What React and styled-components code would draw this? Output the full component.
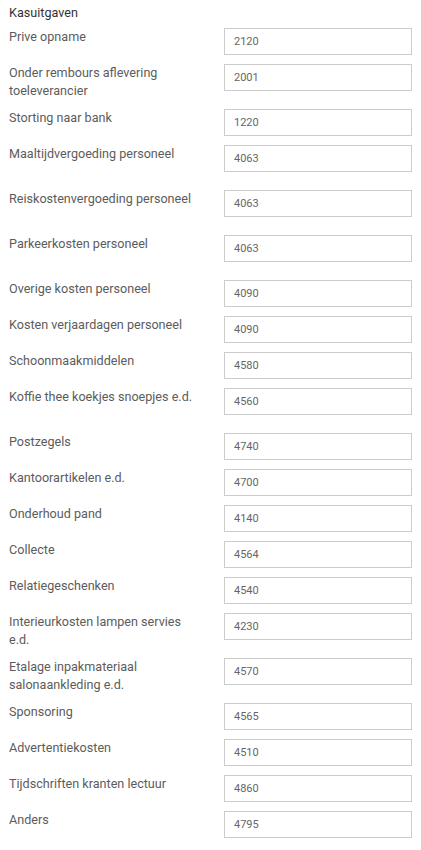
import React from "react";
import styled, { createGlobalStyle } from "styled-components";

const Global = createGlobalStyle`
  html, body { margin: 0; padding: 0; background: #fff; }
  body { font-family: Roboto, "Noto Sans", sans-serif; }
`;

const Page = styled.div`
  width: 421px;
  padding: 4px 9px 20px 9px;
  box-sizing: border-box;
`;

const Heading = styled.div`
  font-size: 12.6px;
  line-height: 18px;
  color: #333;
  margin-bottom: 6px;
`;

const Row = styled.div`
  display: grid;
  grid-template-columns: 185px 188px;
  column-gap: 30px;
  align-items: start;
  margin-bottom: 9px;
`;

const Label = styled.div`
  font-size: 12.6px;
  line-height: 18px;
  color: #5c5c5c;
  min-height: ${(p) => (p.$tall ? "36px" : "0")};
`;

const Field = styled.input`
  box-sizing: border-box;
  width: 188px;
  height: 27px;
  border: 1px solid #ccc;
  border-radius: 0;
  padding: 0 9px;
  font-family: Roboto, "Noto Sans", sans-serif;
  font-size: 11px;
  color: #666;
  background: #fff;
  outline: none;
`;

const rows = [
  ["Prive opname", "2120"],
  ["Onder rembours aflevering toeleverancier", "2001"],
  ["Storting naar bank", "1220"],
  ["Maaltijdvergoeding personeel", "4063", true],
  ["Reiskostenvergoeding personeel", "4063", true],
  ["Parkeerkosten personeel", "4063", true],
  ["Overige kosten personeel", "4090"],
  ["Kosten verjaardagen personeel", "4090"],
  ["Schoonmaakmiddelen", "4580"],
  ["Koffie thee koekjes snoepjes e.d.", "4560", true],
  ["Postzegels", "4740"],
  ["Kantoorartikelen e.d.", "4700"],
  ["Onderhoud pand", "4140"],
  ["Collecte", "4564"],
  ["Relatiegeschenken", "4540"],
  ["Interieurkosten lampen servies e.d.", "4230"],
  ["Etalage inpakmateriaal salonaankleding e.d.", "4570"],
  ["Sponsoring", "4565"],
  ["Advertentiekosten", "4510"],
  ["Tijdschriften kranten lectuur", "4860"],
  ["Anders", "4795"],
];

export default function App() {
  return (
    <>
      <Global />
      <Page>
        <Heading>Kasuitgaven</Heading>
        {rows.map(([label, value, tall], i) => (
          <Row key={i}>
            <Label $tall={tall}>{label}</Label>
            <Field type="text" defaultValue={value} />
          </Row>
        ))}
      </Page>
    </>
  );
}
